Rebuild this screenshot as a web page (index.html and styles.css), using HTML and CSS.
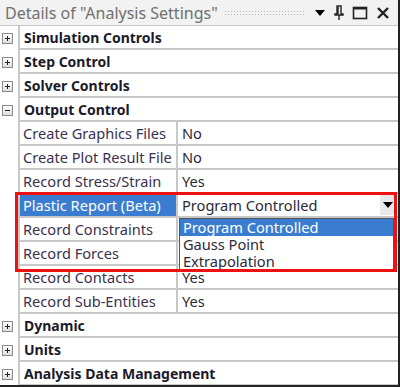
FILE: index.html
```html
<!DOCTYPE html>
<html lang="en">

<head>
    <meta charset="UTF-8">
    <title>Details of "Analysis Settings"</title>
    <link rel="stylesheet" href="styles.css">
</head>

<body>
    <div class="panel">
        <header class="titlebar">
            <span class="title">Details of "Analysis Settings"</span>
            <span class="grip"></span>
            <span class="tb-icons">
                <svg width="12" height="8" viewBox="0 0 12 8"><path d="M1 1 L11 1 L6 7 Z" fill="#000"/></svg>
                <svg width="10" height="16" viewBox="0 0 10 16"><path d="M3 1 H7 V9 H9 V10 H1 V9 H3 Z M4 2 V9 M5 10 V15" stroke="#222" stroke-width="1.4" fill="none"/></svg>
                <svg width="16" height="14" viewBox="0 0 16 14"><rect x="1.5" y="1.5" width="13" height="11" stroke="#222" stroke-width="1.6" fill="none"/><line x1="1.5" y1="2.5" x2="14.5" y2="2.5" stroke="#222" stroke-width="2"/></svg>
                <svg width="14" height="14" viewBox="0 0 14 14"><path d="M2 2 L12 12 M12 2 L2 12" stroke="#222" stroke-width="2.4"/></svg>
            </span>
        </header>

        <section class="tree">
            <div class="group"><span class="toggle"><svg width="11" height="11" viewBox="0 0 11 11"><rect x="0.5" y="0.5" width="10" height="10" fill="url(#btn)" stroke="#8a8a8a"/><path d="M3 5.5 H8 M5.5 3 V8" stroke="#222"/><defs><linearGradient id="btn" x1="0" y1="0" x2="0" y2="1"><stop offset="0" stop-color="#fff"/><stop offset="1" stop-color="#dcdcdc"/></linearGradient></defs></svg></span><span class="gname">Simulation Controls</span></div>
            <div class="group"><span class="toggle"><svg width="11" height="11" viewBox="0 0 11 11"><rect x="0.5" y="0.5" width="10" height="10" fill="url(#btn)" stroke="#8a8a8a"/><path d="M3 5.5 H8 M5.5 3 V8" stroke="#222"/></svg></span><span class="gname">Step Control</span></div>
            <div class="group"><span class="toggle"><svg width="11" height="11" viewBox="0 0 11 11"><rect x="0.5" y="0.5" width="10" height="10" fill="url(#btn)" stroke="#8a8a8a"/><path d="M3 5.5 H8 M5.5 3 V8" stroke="#222"/></svg></span><span class="gname">Solver Controls</span></div>
            <div class="group"><span class="toggle"><svg width="11" height="11" viewBox="0 0 11 11"><rect x="0.5" y="0.5" width="10" height="10" fill="url(#btn)" stroke="#8a8a8a"/><path d="M3 5.5 H8" stroke="#222"/></svg></span><span class="gname">Output Control</span></div>

            <div class="prop"><span class="gutter"></span><span class="label">Create Graphics Files</span><span class="value">No</span></div>
            <div class="prop"><span class="gutter"></span><span class="label">Create Plot Result File</span><span class="value">No</span></div>
            <div class="prop"><span class="gutter"></span><span class="label">Record Stress/Strain</span><span class="value">Yes</span></div>
            <div class="prop selected">
                <span class="gutter"></span><span class="label">Plastic Report (Beta)</span>
                <span class="value combo">Program Controlled
                    <span class="combo-btn"><svg width="10" height="6" viewBox="0 0 10 6"><path d="M0 0 H10 L5 6 Z" fill="#000"/></svg></span>
                </span>
            </div>
            <div class="prop"><span class="gutter"></span><span class="label">Record Constraints</span><span class="value"></span></div>
            <div class="prop"><span class="gutter"></span><span class="label">Record Forces</span><span class="value"></span></div>
            <div class="prop"><span class="gutter"></span><span class="label">Record Contacts</span><span class="value">Yes</span></div>
            <div class="prop"><span class="gutter"></span><span class="label">Record Sub-Entities</span><span class="value">Yes</span></div>

            <div class="group"><span class="toggle"><svg width="11" height="11" viewBox="0 0 11 11"><rect x="0.5" y="0.5" width="10" height="10" fill="url(#btn)" stroke="#8a8a8a"/><path d="M3 5.5 H8 M5.5 3 V8" stroke="#222"/></svg></span><span class="gname">Dynamic</span></div>
            <div class="group"><span class="toggle"><svg width="11" height="11" viewBox="0 0 11 11"><rect x="0.5" y="0.5" width="10" height="10" fill="url(#btn)" stroke="#8a8a8a"/><path d="M3 5.5 H8 M5.5 3 V8" stroke="#222"/></svg></span><span class="gname">Units</span></div>
            <div class="group"><span class="toggle"><svg width="11" height="11" viewBox="0 0 11 11"><rect x="0.5" y="0.5" width="10" height="10" fill="url(#btn)" stroke="#8a8a8a"/><path d="M3 5.5 H8 M5.5 3 V8" stroke="#222"/></svg></span><span class="gname">Analysis Data Management</span></div>

            <ul class="dropdown">
                <li class="active">Program Controlled</li>
                <li>Gauss Point</li>
                <li>Extrapolation</li>
            </ul>
            <div class="highlight"></div>
        </section>
    </div>
</body>

</html>
```

FILE: styles.css
```css
html,
body {
    margin: 0;
    padding: 0;
}

* {
    box-sizing: border-box;
}

body {
    background: #ffffff;
    font-family: "Noto Sans", "Open Sans", sans-serif;
    color: #2a2a3a;
}

.panel {
    width: 400px;
    height: 387px;
    border-right: 2px solid #222;
    border-bottom: 2px solid #222;
    overflow: hidden;
}

.titlebar {
    height: 26px;
    background: #f2f2f2;
    border-bottom: 1px solid #c8c8c8;
    display: flex;
    align-items: center;
    padding: 0 8px 0 5px;
}

.title {
    font-size: 16px;
    color: #707070;
    white-space: nowrap;
}

.grip {
    flex: 1;
    height: 6px;
    margin: 0 8px 0 6px;
    background-image: radial-gradient(#b8b8b8 0.8px, transparent 1px);
    background-size: 3px 3px;
}

.tb-icons {
    display: flex;
    align-items: center;
    gap: 8px;
}

.tree {
    position: relative;
}

.group,
.prop {
    height: 24px;
    display: flex;
    align-items: stretch;
}

.toggle {
    width: 20px;
    flex: none;
    display: flex;
    align-items: center;
    justify-content: center;
    padding-right: 3px;
    border-right: 2px solid #c8c8c8;
}

.gname {
    flex: 1;
    font-weight: bold;
    font-size: 14px;
    padding: 0 0 0 4px;
    display: flex;
    align-items: center;
    border-bottom: 2px solid #c8c8c8;
    color: #1a1a2a;
}

.gutter {
    width: 20px;
    flex: none;
    border-right: 2px solid #c8c8c8;
}

.label {
    width: 158px;
    flex: none;
    font-size: 14.6px;
    padding-left: 3px;
    display: flex;
    align-items: center;
    border-right: 2px solid #c8c8c8;
    border-bottom: 2px solid #c8c8c8;
    white-space: nowrap;
    color: #3a3050;
}

.value {
    flex: 1;
    font-size: 14.6px;
    padding-left: 4px;
    display: flex;
    align-items: center;
    border-bottom: 2px solid #c8c8c8;
    color: #2a2a3a;
}

.selected .label {
    background: #3a7dd0;
    color: #ffffff;
}

.combo {
    position: relative;
}

.combo-btn {
    position: absolute;
    right: 3px;
    top: 1px;
    width: 15px;
    height: 20px;
    background: #e8e8e8;
    display: flex;
    align-items: center;
    justify-content: center;
}

.dropdown {
    position: absolute;
    left: 179px;
    top: 192px;
    width: 215px;
    margin: 0;
    padding: 0;
    list-style: none;
    background: #ffffff;
    border: 1px solid #555;
    font-size: 14.6px;
}

.dropdown li {
    height: 17px;
    line-height: 17px;
    padding-left: 3px;
    color: #2a2a3a;
}

.dropdown li.active {
    background: #3a7dd0;
    color: #ffffff;
}

.highlight {
    position: absolute;
    left: 15px;
    top: 166px;
    width: 382px;
    height: 80px;
    border: 3px solid #ee1111;
    pointer-events: none;
}
```
